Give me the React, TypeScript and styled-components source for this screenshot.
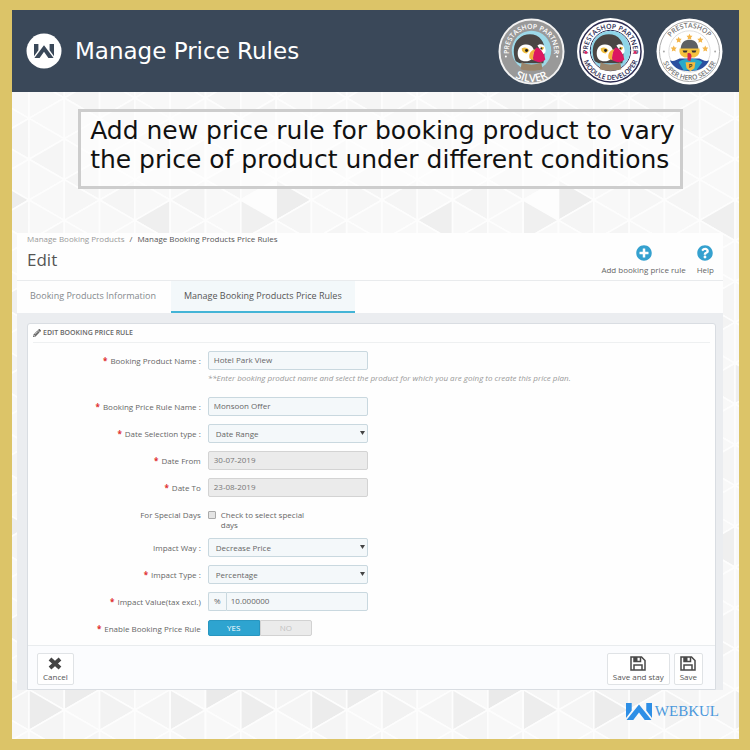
import React from "react";
import styled, { createGlobalStyle, css } from "styled-components";
import { FaPlusCircle, FaQuestionCircle, FaPencilAlt } from "react-icons/fa";

const GlobalStyle = createGlobalStyle`
  *, *::before, *::after { box-sizing: border-box; }
  body { margin: 0; background: #dcc468; }
  button, input, select { font: inherit; color: inherit; margin: 0; }
`;

const Frame = styled.div`
  min-height: 100vh;
  padding: 10px 11px 11px 12px;
  background: #dcc468;
  font-family: "Open Sans", "Noto Sans", sans-serif;
  font-size: 8px;
  line-height: 10px;
  color: #666;
  display: flex;
`;

const Slide = styled.div`
  position: relative;
  flex: 1;
  min-width: 0;
  background: #f9f9f9;
  display: flex;
  flex-direction: column;
  overflow: hidden;
`;

const Backdrop = styled.svg`
  position: absolute;
  inset: 0;
  width: 100%;
  height: 100%;
`;

const TopBar = styled.header`
  position: relative;
  display: flex;
  align-items: center;
  height: 82px;
  padding: 0 16px 0 14px;
  background: #3a4859;
`;

const SlideTitle = styled.h1`
  flex: 1;
  margin: 0 0 0 13px;
  font: 400 23px/30px "DejaVu Sans", sans-serif;
  color: #fff;
`;

const Badges = styled.div`
  display: flex;
  align-items: center;
  gap: 12px;
`;

const Callout = styled.p`
  position: relative;
  align-self: center;
  margin: 17px 0 0 10px;
  padding: 4px 5px 12px 9px;
  border: 3px solid #cdcdcd;
  background: rgba(255, 255, 255, 0.5);
  font: 400 25px/29px "DejaVu Sans", sans-serif;
  color: #111;
`;

const Screen = styled.main`
  position: relative;
  margin: 44px 16px 0 5px;
  background: #ebedf0;
`;

const PageHead = styled.div`
  display: flex;
  justify-content: space-between;
  height: 48px;
  padding: 1px 9px 0 10px;
  background: #fefefe;
  border-bottom: 1px solid #e9ebed;
`;

const Crumbs = styled.nav`
  display: flex;
  gap: 5px;
  color: #555;
  a { color: #999; text-decoration: none; }
`;

const PageTitle = styled.h2`
  margin: 4px 0 0;
  font-size: 17px;
  line-height: 24px;
  font-weight: 400;
  color: #555;
`;

const Actions = styled.div`
  display: flex;
  gap: 11px;
  padding-top: 11px;
`;

const Action = styled.button`
  display: flex;
  flex-direction: column;
  align-items: center;
  gap: 4px;
  padding: 0;
  border: 0;
  background: none;
  svg { color: #35a1cf; }
`;

const Tabs = styled.nav`
  display: flex;
  gap: 2px;
  height: 32px;
  background: #fefefe;
`;

const Tab = styled.a<{ $active?: boolean }>`
  display: flex;
  align-items: center;
  padding: 0 13px;
  font-size: 9px;
  text-decoration: none;
  color: #84898d;
  border-bottom: 2px solid transparent;
  ${(p) =>
    p.$active &&
    css`
      color: #555;
      background: #f3f8fa;
      border-color: #43b4d6;
    `}
`;

const Card = styled.form`
  margin: 10px 7px 0 10px;
  background: #fefefe;
  border: 1px solid #d9dde2;
  border-radius: 3px 3px 0 0;
`;

const CardTitle = styled.h3`
  display: flex;
  align-items: center;
  gap: 2px;
  height: 19px;
  margin: 0 5px 8px;
  border-bottom: 1px solid #eef0f1;
  font-size: 7px;
  font-weight: 600;
  text-transform: uppercase;
`;

const Rows = styled.div`
  display: flex;
  flex-direction: column;
  gap: 8px;
  padding: 0 10px 7px;
`;

const Row = styled.div`
  display: flex;
  gap: 3px;
`;

const Label = styled.label<{ $required?: boolean }>`
  flex: 0 0 25%;
  padding: 5px 4px 0 0;
  height: 19px;
  text-align: right;
  white-space: nowrap;
  ${(p) =>
    p.$required &&
    css`
      &::before { content: "*"; margin-right: 3px; color: #e03030; font-weight: 700; }
    `}
`;

const Control = styled.div`
  position: relative;
  flex: 0 0 24%;
  display: flex;
`;

const field = css`
  width: 100%;
  min-width: 0;
  height: 19px;
  border: 1px solid #c9d8df;
  border-radius: 2px;
  background: #f4f8fa;
  color: #666;
  outline: none;
`;

const TextInput = styled.input<{ $joined?: boolean }>`
  ${field}
  padding: 0 5px 2px;
  ${(p) => p.$joined && css`border-radius: 0 2px 2px 0; padding-left: 4px;`}
  &:disabled { background: #ebebeb; border-color: #d3d3d3; color: #777; opacity: 1; }
`;

const Select = styled.select`
  ${field}
  appearance: none;
  padding: 0 12px 0 7px;
`;

const Caret = styled.svg`
  position: absolute;
  right: 3px;
  top: 7px;
  pointer-events: none;
`;

const Addon = styled.span`
  flex: 0 0 18px;
  height: 19px;
  line-height: 16px;
  text-align: center;
  border: 1px solid #c9d8df;
  border-right: 0;
  border-radius: 2px 0 0 2px;
  background: #f4f8fa;
`;

const Hint = styled.p`
  margin: -5px 0 6px 25%;
  padding-left: 3px;
  font-style: italic;
  color: #999;
`;

const CheckLabel = styled.label`
  display: flex;
  gap: 5px;
  width: 106px;
  padding: 5px 0 0;
`;

const CheckBox = styled.input`
  appearance: none;
  flex: none;
  width: 8px;
  height: 8px;
  margin-top: 1px;
  border: 1px solid #aaa;
  border-radius: 1px;
  background: #e4e4e4;
`;

const Switch = styled.div`
  display: flex;
  width: 104px;
  height: 16px;
  margin-top: 1px;
`;

const SwitchOption = styled.label<{ $on?: boolean }>`
  flex: 1;
  text-align: center;
  line-height: 14px;
  border: 1px solid #d2d2d2;
  background: #ebebeb;
  color: #c2c2c2;
  border-radius: 0 2px 2px 0;
  ${(p) =>
    p.$on &&
    css`
      background: #2ea4d0;
      border-color: #2896c0;
      color: #fff;
      border-radius: 2px 0 0 2px;
    `}
  input { appearance: none; position: absolute; }
`;

const CardFoot = styled.footer`
  display: flex;
  gap: 4px;
  height: 44px;
  padding: 7px 12px 4px 9px;
  border-top: 1px solid #e9ecee;
  background: #fbfcfe;
`;

const FootButton = styled.button<{ $push?: boolean }>`
  display: flex;
  flex-direction: column;
  align-items: center;
  justify-content: flex-end;
  gap: 1px;
  height: 32px;
  padding: 0 5px 2px;
  border: 1px solid #e0e3e6;
  border-radius: 2px;
  background: #fff;
  color: #555;
  margin-left: ${(p) => (p.$push ? "auto" : "0")};
`;

const Brand = styled.div`
  position: relative;
  display: flex;
  justify-content: flex-end;
  align-items: center;
  gap: 3px;
  padding: 9px 20px 0 0;
  font: 400 15px/24px "Liberation Serif", serif;
  color: #4b98dc;
`;

const COL = 35.3;
const HALF = 20.4;
const shades: Record<string, string> = {
  "7,0": "#ededed", "6,1": "#f0f0f0", "3,1": "#efefef", "4,0": "#f4f4f4", "6,0": "#fdfdfd",
  "1,0": "#f6f6f6", "5,7": "#eeeeee", "2,7": "#f2f2f2", "7,5": "#f0f0f0", "3,6": "#f3f3f3",
  "1,8": "#ececec", "5,8": "#eaeaea", "4,9": "#efefef", "0,8": "#f3f3f3", "6,9": "#ededed",
  "0,9": "#ececec", "2,9": "#f2f2f2", "7,8": "#f4f4f4", "2,6": "#f1f1f1", "0,4": "#f3f3f3",
};

function Pattern() {
  const cells: React.ReactNode[] = [];
  for (let c = -1; c < 21; c++) {
    for (let j = -7; j < 28; j++) {
      const x = 17 + c * COL;
      const y = 190 + j * HALF;
      const right = Math.abs(c + j) % 2 === 1;
      const base = right ? x : x + COL;
      const tip = right ? x + COL : x;
      const key = `${(c + 8) % 8},${(j + 16) % 16}`;
      cells.push(
        <path
          key={`${c},${j}`}
          d={`M${base} ${y - HALF}L${base} ${y + HALF}L${tip} ${y}Z`}
          fill={shades[key] || ((c * 3 + j * 5 + 90) % 4 === 0 ? "#f5f5f5" : "#f8f8f8")}
        />
      );
    }
  }
  return (
    <Backdrop aria-hidden="true" stroke="#fdfdfd" strokeWidth="1.6">
      {cells}
    </Backdrop>
  );
}

function Mark({ x = 0, y = 0, w, h, color }: { x?: number; y?: number; w: number; h: number; color: string }) {
  return (
    <svg x={x} y={y} width={w} height={h} viewBox="0 0 25 17" preserveAspectRatio="none" fill={color} aria-hidden="true">
      <path d="M0 0h5.500v7.500L0 15zM19.500 0H25v15l-5.500-7.500zM12.500 1.500L24.500 17H18l-5.500-7.500L7 17H.5z" />
    </svg>
  );
}

function Puffin({ sky }: { sky: string }) {
  return (
    <g>
      <circle cx="34" cy="33" r="20" fill={sky} />
      <path d="M18 44c-3-8-3-18 3-23 6-6 18-6 23 1 4 5 4 13 2 24H22z" fill="#4a4644" />
      <path d="M20 36c0-6 4-10 9-9 5 0 8 4 8 9 0 4-4 8-9 8-5 0-8-3-8-8z" fill="#fff" />
      <path d="M40 28c3-3 8-1 8 3 1 3 0 5-2 6z" fill="#fff" />
      <path d="M24 31c3-2 6-1 8 2l-3 3c-3 0-5-2-5-5zM43 29l4 1-2 3z" fill="#eebc3c" />
      <circle cx="29" cy="33" r="1.500" fill="#222" />
      <circle cx="44" cy="31" r="1" fill="#222" />
      <path d="M39 30c5 1 8 7 9 12-3 3-7 4-12 1-1-5 0-10 3-13z" fill="#dc1760" />
      <path d="M37 32c-4 1-6 5-5 9l4 2c-1-4 0-8 2-11z" fill="#f2b13c" />
      <path d="M24 45c7 3 13 3 20 0l1 7c-7 2-15 2-22 0z" fill="#9a856b" />
    </g>
  );
}

const BadgeText = styled.text`
  font-family: "Open Sans", sans-serif;
  font-weight: 600;
  text-anchor: middle;
`;

function Arcs({ id, rTop, rBottom }: { id: string; rTop: number; rBottom: number }) {
  return (
    <defs>
      <path id={`${id}-top`} d={`M${34 - rTop} 34v6v-6a${rTop} ${rTop} 0 0 1 ${rTop * 2} 0v6v-6`} />
      <path id={`${id}-bottom`} d={`M${34 - rBottom} 34a${rBottom} ${rBottom} 0 0 0 ${rBottom * 2} 0`} />
    </defs>
  );
}

function Curve({ href, size, fill, children }: { href: string; size: number; fill: string; children: string }) {
  return (
    <BadgeText fontSize={size} fill={fill}>
      <textPath href={href} startOffset="50%">{children}</textPath>
    </BadgeText>
  );
}

function SilverBadge() {
  return (
    <svg width="67" height="67" viewBox="0 0 68 68">
      <Arcs id="silver" rTop={23} rBottom={31} />
      <circle cx="34" cy="34" r="32.500" fill="#999" stroke="#f2f2f2" strokeWidth="2" />
      <Puffin sky="#9dd9e8" />
      <Curve href="#silver-top" size={7} fill="#fff">PRESTASHOP PARTNER</Curve>
      <Curve href="#silver-bottom" size={11} fill="#fff">SILVER</Curve>
      <circle cx="8" cy="39" r="1" fill="#fff" />
      <circle cx="60" cy="39" r="1" fill="#fff" />
    </svg>
  );
}

function DeveloperBadge() {
  return (
    <svg width="67" height="67" viewBox="0 0 68 68">
      <Arcs id="dev" rTop={23} rBottom={29} />
      <circle cx="34" cy="34" r="34" fill="#fff" />
      <circle cx="34" cy="34" r="31" fill="none" stroke="#2c2b52" strokeWidth="1.500" />
      <circle cx="34" cy="33" r="20.500" fill="none" stroke="#2c2b52" />
      <Puffin sky="#8fd5e8" />
      <Curve href="#dev-top" size={7} fill="#2c2b52">PRESTASHOP PARTNER</Curve>
      <Curve href="#dev-bottom" size={7} fill="#2c2b52">MODULE DEVELOPER</Curve>
      <circle cx="9" cy="35" r="1.500" fill="#df2363" />
      <circle cx="59" cy="35" r="1.500" fill="#df2363" />
    </svg>
  );
}

const stars = [[18, 31], [23, 22], [34, 19], [45, 22], [50, 31]];

function SellerBadge() {
  return (
    <svg width="67" height="67" viewBox="0 0 68 68">
      <Arcs id="seller" rTop={24} rBottom={29} />
      <circle cx="34" cy="34" r="33.500" fill="#fff" />
      <circle cx="34" cy="34" r="30.500" fill="none" stroke="#aaa" />
      <circle cx="34" cy="34" r="21" fill="none" stroke="#ddd" />
      {stars.map(([x, y]) => (
        <path key={x} transform={`translate(${x} ${y})`} fill="#f4b64b" d="M0-3L1-1 3-1 1.500 1 2 3 0 2-2 3-1.500 1-3-1-1-1z" />
      ))}
      <path d="M14 43c4 2 7-1 10-2h20c3 1 6 4 10 2-3 6-8 11-20 11s-17-5-20-11z" fill="#2b4f9f" />
      <path d="M25 32c0-7 4-10 9-10s9 3 9 10z" fill="#5d6064" />
      <path d="M24 31h20c1 4-1 8-5 9H29c-4-1-6-5-5-9z" fill="#f5c23e" />
      <path d="M27 33h5l-1 2h-3zM36 33h5l-1 2h-3z" fill="#333" />
      <path d="M23 45c3-5 20-5 24 0l-6 8H28z" fill="#29a9c9" />
      <path d="M32 36c2-1 4 0 4 3l-1 5-3-1z" fill="#d3264a" />
      <path d="M30 45h10l-1 6-4 3-4-3z" fill="#f5b93c" />
      <BadgeText x="35" y="51" fontSize="6" fill="#222">P</BadgeText>
      <Curve href="#seller-top" size={7} fill="#777">PRESTASHOP</Curve>
      <Curve href="#seller-bottom" size={7} fill="#777">SUPER HERO SELLER</Curve>
      <circle cx="8" cy="34" r="1" fill="#aaa" />
      <circle cx="60" cy="34" r="1" fill="#aaa" />
    </svg>
  );
}

function FloppyIcon() {
  return (
    <svg width="16" height="15" viewBox="0 0 16 15" fill="none" stroke="#484848" strokeWidth="1.500" aria-hidden="true">
      <path d="M1 1h10.500L15 4.500V14H1z" />
      <path d="M4 14V9h8v5" />
      <path d="M4 1v4.500h6.500V1" />
      <path d="M4 1h3.500v4H4z" fill="#484848" stroke="none" />
    </svg>
  );
}

function CrossIcon() {
  return (
    <svg width="14" height="14" viewBox="0 0 14 14" stroke="#444" strokeWidth="4" aria-hidden="true">
      <path d="M2 2l10 9M12 2L2 11" />
    </svg>
  );
}

function SelectBox({ id, value }: { id: string; value: string }) {
  return (
    <Control>
      <Select id={id} defaultValue={value}>
        <option>{value}</option>
      </Select>
      <Caret width="5" height="4" viewBox="0 0 5 4" aria-hidden="true">
        <path d="M0 0h5L2.500 4z" fill="#444" />
      </Caret>
    </Control>
  );
}

export default function App() {
  return (
    <Frame>
      <GlobalStyle />
      <Slide>
        <Pattern />
        <TopBar>
          <svg width="36" height="36" viewBox="0 0 36 36" aria-hidden="true">
            <circle cx="18" cy="18" r="17.500" fill="#fff" />
            <Mark x={8} y={11} w={20} h={14} color="#3a4859" />
          </svg>
          <SlideTitle>Manage Price Rules</SlideTitle>
          <Badges>
            <SilverBadge />
            <DeveloperBadge />
            <SellerBadge />
          </Badges>
        </TopBar>
        <Callout>
          Add new price rule for booking product to vary
          <br />
          the price of product under different conditions
        </Callout>
        <Screen>
          <PageHead>
            <div>
              <Crumbs aria-label="Breadcrumb">
                <a href="#products">Manage Booking Products</a>
                <span>/</span>
                <span>Manage Booking Products Price Rules</span>
              </Crumbs>
              <PageTitle>Edit</PageTitle>
            </div>
            <Actions>
              <Action type="button"><FaPlusCircle size={16} />Add booking price rule</Action>
              <Action type="button"><FaQuestionCircle size={16} />Help</Action>
            </Actions>
          </PageHead>
          <Tabs>
            <Tab href="#information">Booking Products Information</Tab>
            <Tab href="#rules" $active>Manage Booking Products Price Rules</Tab>
          </Tabs>
          <Card>
            <CardTitle><FaPencilAlt size={8} />Edit booking price rule</CardTitle>
            <Rows>
              <Row>
                <Label htmlFor="product" $required>Booking Product Name :</Label>
                <Control><TextInput id="product" defaultValue="Hotel Park View" /></Control>
              </Row>
              <Hint>**Enter booking product name and select the product for which you are going to create this price plan.</Hint>
              <Row>
                <Label htmlFor="rule" $required>Booking Price Rule Name :</Label>
                <Control><TextInput id="rule" defaultValue="Monsoon Offer" /></Control>
              </Row>
              <Row>
                <Label htmlFor="dateType" $required>Date Selection type :</Label>
                <SelectBox id="dateType" value="Date Range" />
              </Row>
              <Row>
                <Label htmlFor="from" $required>Date From</Label>
                <Control><TextInput id="from" disabled defaultValue="30-07-2019" /></Control>
              </Row>
              <Row>
                <Label htmlFor="to" $required>Date To</Label>
                <Control><TextInput id="to" disabled defaultValue="23-08-2019" /></Control>
              </Row>
              <Row>
                <Label htmlFor="special">For Special Days</Label>
                <CheckLabel><CheckBox id="special" type="checkbox" />Check to select special days</CheckLabel>
              </Row>
              <Row>
                <Label htmlFor="way">Impact Way :</Label>
                <SelectBox id="way" value="Decrease Price" />
              </Row>
              <Row>
                <Label htmlFor="type" $required>Impact Type :</Label>
                <SelectBox id="type" value="Percentage" />
              </Row>
              <Row>
                <Label htmlFor="impact" $required>Impact Value(tax excl.)</Label>
                <Control>
                  <Addon>%</Addon>
                  <TextInput id="impact" $joined defaultValue="10.000000" />
                </Control>
              </Row>
              <Row>
                <Label as="span" $required>Enable Booking Price Rule</Label>
                <Switch role="radiogroup" aria-label="Enable Booking Price Rule">
                  <SwitchOption $on><input type="radio" name="enable" defaultChecked />YES</SwitchOption>
                  <SwitchOption><input type="radio" name="enable" />NO</SwitchOption>
                </Switch>
              </Row>
            </Rows>
            <CardFoot>
              <FootButton type="button"><CrossIcon />Cancel</FootButton>
              <FootButton type="submit" $push><FloppyIcon />Save and stay</FootButton>
              <FootButton type="submit"><FloppyIcon />Save</FootButton>
            </CardFoot>
          </Card>
        </Screen>
        <Brand>
          <Mark w={26} h={17} color="#2e8fe6" />
          WEBKUL
        </Brand>
      </Slide>
    </Frame>
  );
}
